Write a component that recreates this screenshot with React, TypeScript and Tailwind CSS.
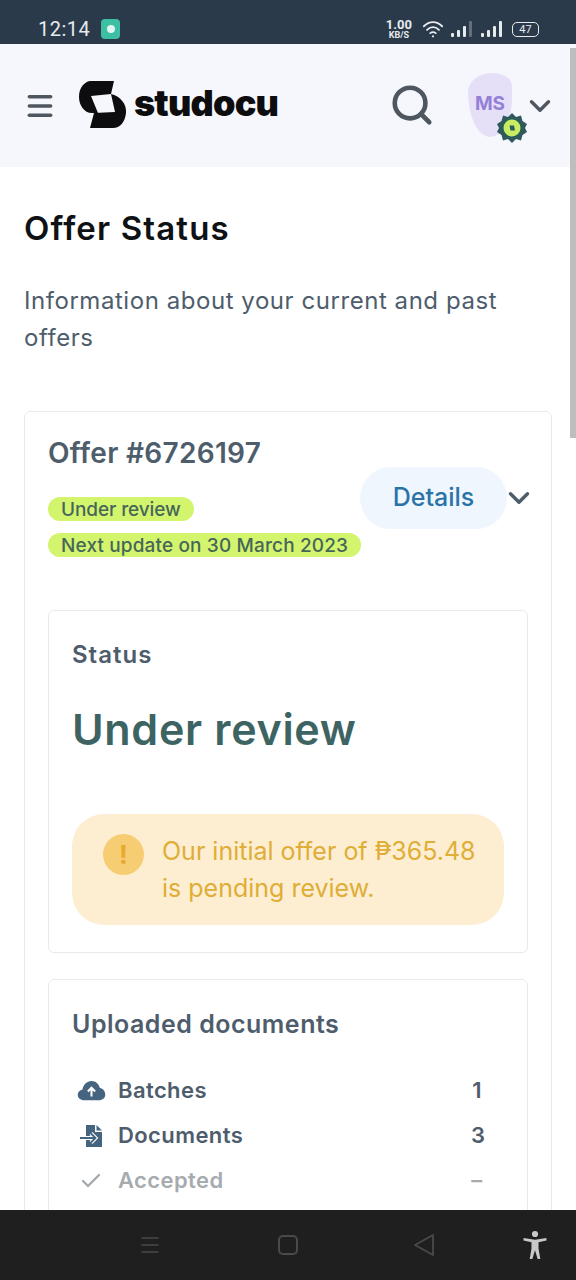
import React from 'react';
import { ChevronDown, Search, Check, Menu } from 'lucide-react';

function StudocuMark({ className }: { className?: string }) {
  return (
    <svg viewBox="0 0 48 47" className={className} fill="#0d0d0f">
      <path d="M11 0H35L32 13L12 15L19 32H13C5 32 0 24 0 16C0 7 5 1 11 0Z" />
      <path d="M32 13C41 15 48 23 47 32C46 41 41 47 34 47H11L15 32L36 31Z" />
    </svg>
  );
}

function Signal({ dim }: { dim?: boolean }) {
  return (
    <svg viewBox="0 0 22 20" className="w-[22px] h-[20px]" fill="#e6ebee">
      <rect x="0" y="14" width="3" height="4" rx="1" />
      <rect x="6" y="11" width="3" height="7" rx="1" />
      <rect x="12" y="7" width="3" height="11" rx="1" />
      <rect x="18" y="2" width="3" height="16" rx="1" opacity={dim ? 0.3 : 1} />
    </svg>
  );
}

function StatusBar() {
  return (
    <div className="h-[44px] shrink-0 bg-[#2b3a4b] flex items-center pl-[38px] pr-[37px] pt-[14px] text-[#e6ebee] font-['Roboto',sans-serif]">
      <span className="text-[20px] leading-none tracking-[0.5px]">12:14</span>
      <div className="ml-[11px] w-[19px] h-[20px] rounded-[4px] bg-[#3cbfa3] flex items-center justify-center">
        <div className="w-[8px] h-[8px] rounded-full bg-[#e3f5f0]" />
      </div>
      <div className="ml-auto flex items-center">
        <div className="flex flex-col items-center font-bold">
          <span className="text-[13px] leading-[13px]">1.00</span>
          <span className="text-[9px] leading-[9px]">KB/S</span>
        </div>
        <svg viewBox="0 0 24 20" className="ml-[10px] w-[22px] h-[20px]" fill="none" stroke="#e6ebee" strokeWidth="2" strokeLinecap="round">
          <path d="M2 7C8 1 16 1 22 7" />
          <path d="M5.5 11C9.5 7 14.5 7 18.5 11" />
          <path d="M9 14.5C11 13 13 13 15 14.5" />
          <circle cx="12" cy="18" r="1.2" fill="#e6ebee" stroke="none" />
        </svg>
        <div className="ml-[7px]"><Signal dim /></div>
        <div className="ml-[8px]"><Signal /></div>
        <div className="ml-[9px] w-[27px] h-[15px] rounded-[5px] border border-[#e6ebee] flex items-center justify-center text-[11px] leading-none">47</div>
      </div>
    </div>
  );
}

function Header() {
  return (
    <div className="h-[123px] shrink-0 bg-[#f6f7fc] flex items-center pl-[24px] pr-[19px]">
      <Menu size={32} strokeWidth={2.6} className="text-[#4e5660]" />
      <StudocuMark className="ml-[23px] w-[48px] h-[47px] -mt-[2px]" />
      <span className="ml-[7px] -mt-[6px] text-[36px] leading-none font-black tracking-[-0.8px] text-[#0d0d0f]">studocu</span>
      <Search size={46} strokeWidth={2.4} className="ml-auto -mt-[1px] text-[#4e5660]" />
      <div className="relative ml-[33px] w-[44px] h-[64px] -mt-[2px] bg-[#e6dff8] rounded-[55%_45%_50%_50%/30%_20%_60%_70%] flex items-center justify-center">
        <span className="text-[19px] font-bold text-[#9481d6]">MS</span>
        <svg viewBox="0 0 32 32" className="absolute -right-[16px] bottom-[-7px] w-[32px] h-[32px]">
          <path d="M16 1L20 5L25 3.5L26.5 9L31 12L29 16L31 20L26.5 23L25 28.5L20 27L16 31L12 27L7 28.5L5.5 23L1 20L3 16L1 12L5.5 9L7 3.5L12 5Z" fill="#2f5a5c" />
          <circle cx="16" cy="16" r="8.500" fill="#c8ec62" />
          <path d="M13.500 13.500H18L19 18.500H14.500Z" fill="#2f5a5c" />
        </svg>
      </div>
      <ChevronDown size={34} strokeWidth={2.4} className="ml-[11px] text-[#4e5660]" />
    </div>
  );
}

function Pill({ children, className = '' }: { children: React.ReactNode; className?: string }) {
  return (
    <span className={`h-[24px] rounded-full bg-[#d3f56d] px-[13px] flex items-center text-[19px] leading-none font-medium text-[#47665a] w-fit ${className}`}>
      {children}
    </span>
  );
}

function DocRow({ icon, label, value, muted }: { icon: React.ReactNode; label: string; value: string; muted?: boolean }) {
  return (
    <div className={`h-[45px] flex items-center text-[22px] tracking-[0.4px] font-semibold ${muted ? 'text-[#a6abb0]' : 'text-[#4e5d6c]'}`}>
      <div className="w-[46px] pl-[6px] flex items-center">{icon}</div>
      <span>{label}</span>
      <span className="ml-auto mr-[21px] w-[12px] text-center">{value}</span>
    </div>
  );
}

export default function App() {
  return (
    <div className="h-[1280px] w-[576px] flex flex-col overflow-hidden bg-white relative font-['Inter',sans-serif]">
      <StatusBar />
      <Header />

      <main className="flex-1 overflow-hidden px-[24px] pt-[41px]">
        <h1 className="text-[33px] leading-[40px] font-semibold tracking-[1.15px] text-[#0f1214]">Offer Status</h1>
        <p className="mt-[34px] text-[24px] leading-[37px] tracking-[0.55px] text-[#4e5d6c] w-[500px]">Information about your current and past offers</p>

        <section className="mt-[55px] border border-[#e7e9ec] rounded-[6px] px-[23px] pt-[23px] pb-[24px]">
          <h2 className="text-[28px] leading-[36px] font-semibold tracking-[0.3px] text-[#4e5d6c]">Offer #6726197</h2>

          <div className="relative mt-[26px] flex flex-col gap-[12px]">
            <Pill className="tracking-[-0.1px]">Under review</Pill>
            <Pill className="tracking-[0.14px]">Next update on 30 March 2023</Pill>
            <div className="absolute left-[312px] -top-[30px] flex items-center">
              <div className="w-[147px] h-[62px] rounded-full bg-[#eff6fd] flex items-center justify-center text-[25px] font-medium text-[#2a73a8]">Details</div>
              <ChevronDown size={34} strokeWidth={2.4} className="-ml-[5px] text-[#4e5d6c]" />
            </div>
          </div>

          <div className="mt-[53px] h-[343px] border border-[#e7e9ec] rounded-[6px] px-[23px] pt-[28px]">
            <h3 className="text-[24px] leading-[32px] font-semibold tracking-[1px] text-[#4e5d6c]">Status</h3>
            <p className="mt-[32px] text-[43px] leading-[52px] font-semibold tracking-[0.7px] text-[#3d6463]">Under review</p>
            <div className="mt-[59px] h-[111px] rounded-[32px] bg-[#fdeed2] flex pl-[31px] pt-[18px]">
              <div className="w-[41px] h-[41px] shrink-0 mt-[2px] rounded-full bg-[#f6cd73] flex items-center justify-center text-[26px] font-bold text-[#e9a92c]">!</div>
              <p className="ml-[18px] mt-[1px] text-[25px] leading-[37px] text-[#e0ad37]">Our initial offer of ₱365.48<br />is pending review.</p>
            </div>
          </div>

          <div className="mt-[26px] border border-[#e7e9ec] rounded-[6px] px-[23px] pt-[27px] pb-[40px]">
            <h3 className="text-[25px] leading-[34px] font-semibold tracking-[0.5px] text-[#4e5d6c]">Uploaded documents</h3>
            <div className="mt-[27px] flex flex-col">
              <DocRow
                label="Batches"
                value="1"
                icon={
                  <svg viewBox="0 0 30 24" className="w-[29px] h-[22px] -ml-[1px]">
                    <path d="M7 22C3 22 0 19.5 0 16C0 13 2 11 5 10.5C6 5 10 1 15 1C19.500 1 23 4 24 8.500C27.500 9.500 30 12 30 16C30 19.500 27 22 23 22Z" fill="#456480" />
                    <path d="M15 18V9M11 12.500L15 8.500L19 12.500" fill="none" stroke="#fff" strokeWidth="2.200" />
                  </svg>
                }
              />
              <DocRow
                label="Documents"
                value="3"
                icon={
                  <svg viewBox="0 0 24 24" className="w-[24px] h-[24px] ml-[2px]">
                    <path d="M6 1H15V8H22V23H6Z" fill="#456480" />
                    <path d="M16.500 1L22 6.500H16.500Z" fill="#456480" />
                    <path d="M0 14H15M11 9.500L15.500 14L11 18.500" fill="none" stroke="#fff" strokeWidth="4" />
                    <path d="M0 14H15M11 9.500L15.500 14L11 18.500" fill="none" stroke="#456480" strokeWidth="1.800" />
                  </svg>
                }
              />
              <DocRow muted label="Accepted" value="–" icon={<Check size={24} strokeWidth={2.4} className="text-[#a6abb0] ml-[1px]" />} />
            </div>
          </div>
        </section>
      </main>

      <nav className="h-[70px] shrink-0 bg-[#1f1f1f] flex items-center pl-[138px] relative z-10">
        <Menu size={24} strokeWidth={1.500} className="text-[#4a4a4a]" />
        <div className="ml-[116px] w-[20px] h-[20px] rounded-[5px] border-2 border-[#4a4a4a]" />
        <svg viewBox="0 0 24 24" className="ml-[114px] w-[24px] h-[24px]" fill="none" stroke="#4a4a4a" strokeWidth="1.800" strokeLinejoin="round">
          <path d="M21 2V22L3 12Z" />
        </svg>
        <svg viewBox="0 0 28 34" className="ml-[86px] w-[26px] h-[30px]" fill="#c9c9c9">
          <circle cx="14" cy="4.500" r="3.500" />
          <path d="M1 9L14 11L27 9V12L18 14V21L20 33H17L14 23L11 33H8L10 21V14L1 12Z" />
        </svg>
      </nav>

      <div className="absolute right-0 top-[48px] w-[6px] h-[390px] bg-[#bdbdbd]" />
    </div>
  );
}
